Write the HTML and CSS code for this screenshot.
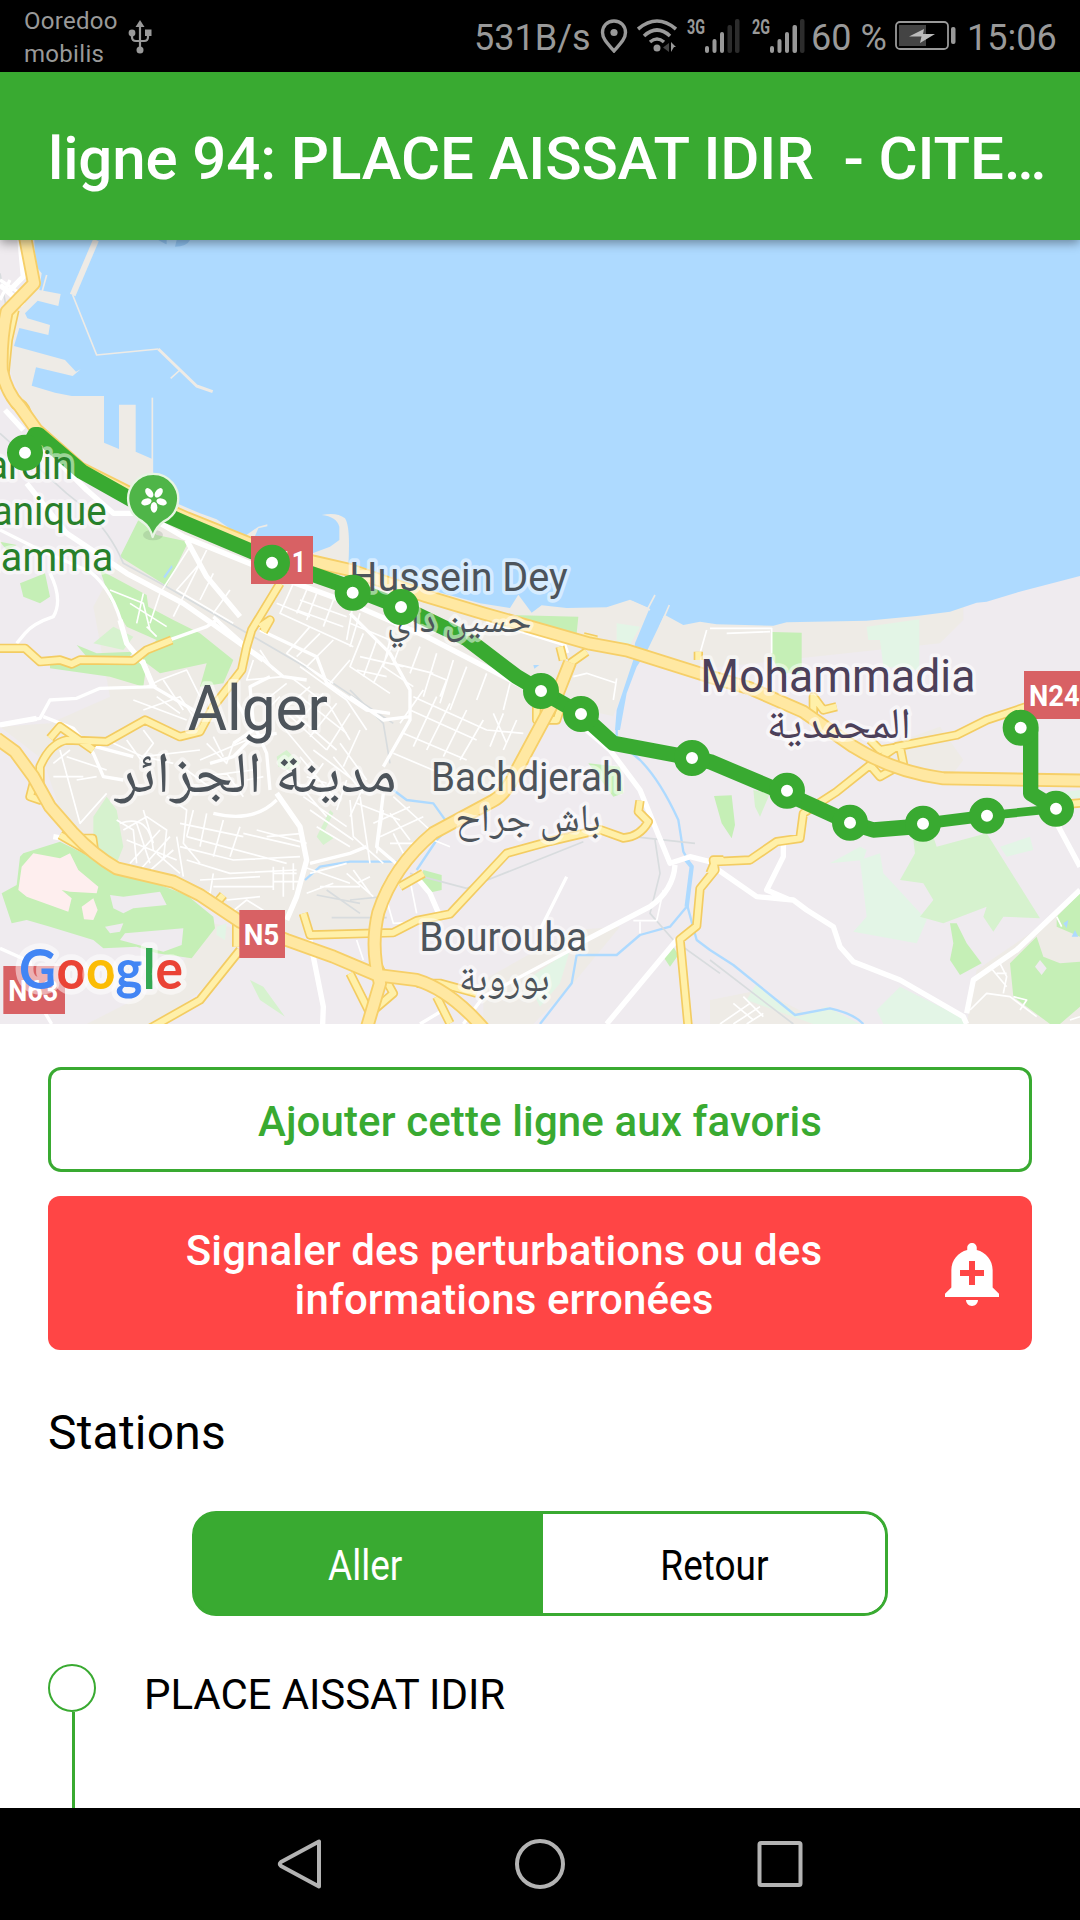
FILE: index.html
```html
<!DOCTYPE html>
<html lang="fr">
<head>
<meta charset="utf-8">
<title>Ligne 94</title>
<link rel="stylesheet" href="styles.css">
</head>
<body>
<div class="status">
  <div class="carriers"><span>Ooredoo</span><span>mobilis</span></div>
  <svg class="usb" viewBox="0 0 24 34" width="24" height="34">
    <path d="M12 4v26M4 14v3q0 4 4 4h8q4 0 4-4v-3" fill="none" stroke="#999" stroke-width="2.2"/>
    <path d="M12 0l4.500 7h-9z" fill="#999"/><circle cx="12" cy="30" r="3.500" fill="#999"/>
    <circle cx="4" cy="13" r="3.400" fill="#999"/><rect x="17" y="9.500" width="6.500" height="6.500" fill="#999"/>
  </svg>
  <div class="grow"></div>
  <span class="speed">531B/s</span>
  <svg class="loc" viewBox="0 0 28 34" width="28" height="34">
    <path d="M14 2C7 2 2.500 7 2.500 13.500 2.500 20 8 25 14 32 20 25 25.500 20 25.500 13.500 25.500 7 21 2 14 2z" fill="none" stroke="#999" stroke-width="3.400"/><circle cx="14" cy="13.500" r="3.600" fill="#999"/>
  </svg>
  <svg class="wifi" viewBox="0 0 40 34" width="40" height="34">
    <g fill="none" stroke="#999" stroke-width="3.600"><path d="M1 10Q20-6 39 10M7 17Q20 5 33 17M13 23Q20 17 27 23"/></g>
    <circle cx="20" cy="29" r="3.500" fill="#999"/><path d="M32 24v9l-6-4.500z" fill="#444"/><path d="M34 23l5 5h-2l-3 5z" fill="#999"/>
  </svg>
  <svg class="signal" viewBox="0 0 53 36" width="53" height="36">
    <text x="0" y="17" textLength="18" lengthAdjust="spacingAndGlyphs" class="net">3G</text>
    <g fill="#999"><rect x="18" y="29" width="4" height="7" rx="2"/><rect x="25.500" y="22" width="4" height="14" rx="2"/><rect x="33" y="15" width="4" height="21" rx="2"/></g>
    <g fill="#2c2c2c"><rect x="40.500" y="8" width="4.500" height="28" rx="2"/><rect x="48" y="2" width="4.500" height="34" rx="2"/></g>
  </svg>
  <svg class="signal second" viewBox="0 0 53 36" width="53" height="36">
    <text x="0" y="17" textLength="18" lengthAdjust="spacingAndGlyphs" class="net">2G</text>
    <g fill="#999"><rect x="18" y="29" width="4" height="7" rx="2"/><rect x="25.500" y="22" width="4" height="14" rx="2"/><rect x="33" y="15" width="4" height="21" rx="2"/><rect x="40.500" y="8" width="4.500" height="28" rx="2"/></g>
    <rect x="48" y="2" width="4.500" height="34" rx="2" fill="#2c2c2c"/>
  </svg>
  <span class="percent">60 %</span>
  <svg class="battery" viewBox="0 0 62 30" width="62" height="30">
    <rect x="1" y="1" width="52" height="27" rx="4" fill="none" stroke="#999" stroke-width="1.800"/><rect x="4" y="4" width="27" height="21" fill="#444"/>
    <path d="M14 15.500L29 8l-1 5h12L25 22l1.500-6.500z" fill="#bbb"/><rect x="56" y="6" width="4.500" height="17" rx="2" fill="#999"/>
  </svg>
  <span class="clock">15:06</span>
</div>

<header class="appbar"><h1>ligne 94: PLACE AISSAT IDIR&nbsp; - CITE…</h1></header>

<svg class="map" viewBox="0 30 3240 2352" preserveAspectRatio="none">
  <defs>
    <path id="highways" d="M75 20L102 160L20 245Q2 330 5 420Q20 490 60 530L110 600L240 715L400 795L560 865L760 945L940 995L1050 1020L1280 1099L1450 1150L1770 1241L1880 1261L2130 1340L2250 1375L2410 1445L2560 1550Q2680 1625 2830 1645L3250 1652M-10 1525L45 1565L100 1640L150 1730L220 1810Q280 1875 350 1915L520 1955L600 1995L720 2075L860 2130L1000 2180L1130 2235L1250 2250Q1350 2280 1450 2395M1710 1297L1670 1398L1550 1621Q1520 1690 1480 1712L1300 1809Q1180 1910 1135 2047Q1110 2150 1140 2260L1100 2395"/>
    <path id="avenues" d="M-10 1255H75L120 1295L180 1290L215 1302L240 1290L400 1292L440 1260L515 1230M840 1060L755 1200L740 1250L725 1320L640 1430L600 1505L540 1520L435 1470L320 1535L200 1530Q150 1540 120 1610V1710L90 1700L100 1660M45 240L25 330L15 430M720 2160L600 2310L450 2395M710 2080V2150M910 2050L930 2115L1180 2108L1250 2072L1350 2052L1520 1870L1650 1834L1800 1799L1870 1824Q1920 1820 1945 1775L1915 1745L1920 1712M2170 1890L2140 1890L2145 1920L2100 1976L2090 2088L2040 2128L2065 2395M2130 1930L2145 1895L2250 1890L2330 1835L2400 1825L2410 1750L2510 1685L2610 1605L2690 1550L2870 1515L2960 1470L3080 1430M2610 1605L2640 1640L2710 1600L2700 1550L2640 1560L2610 1530M2440 1460V1400L2470 1440L2510 1430M3170 1725L3250 1718M780 1190L810 1170L790 1205M640 2030L670 1995M180 1815L285 1875L278 1825L240 1825M1610 1430V1470L1670 1470L1680 1440M1710 1300L1760 1265M1690 1290L1680 1250M1750 1220L1790 1230M2095 1290V1265M1200 1970L1270 1930M1050 2230L1110 2350L1180 2290L1130 2200M1250 2260L1320 2260L1430 2290M1310 2300L1350 2380M30 525Q70 500 85 560M150 1525L180 1490L280 1560"/>
  </defs>

  <rect class="base" y="30" width="3240" height="2352"/>
  <g class="urban">
    <path d="M75 30L110 180L40 220L20 400L90 560L380 800L430 880L360 980L280 1130L330 1400L150 1480L0 1490L130 1590L200 1800L350 1915L640 2010L860 2120L1110 2100L1200 1920L1300 1809L1550 1650L1670 1420L1840 1459L1910 1276L2100 1317L2820 1240L2890 1170V1000Z"/>
    <path d="M2900 2382L2930 2220L3120 2090L3240 1980V2382ZM560 2180L640 2080L860 2130L720 2180L480 2382H260L500 2260ZM1450 2250L1720 2100L1860 2090L1720 2260L1600 2382H1450ZM2130 2310L2280 2280L2480 2382H2130ZM2570 1580L2820 1490L2890 1590L2860 1630L2720 1610Z"/>
  </g>

  <path class="pale" d="M2600 1190L2758 1168V1320L2650 1310L2640 1230H2605ZM1850 1180L1920 1190L1890 1245L1850 1235ZM2490 1900L2580 1850L2600 1860L2590 1890ZM2580 1890L2640 1870L2650 1930L2780 2070L2750 2140L2560 2105L2600 2060ZM3000 1850L3090 1820L3100 1860L3020 1880ZM2630 2340L2700 2270L2900 2370V2382H2650ZM2240 2310L2270 2260L2400 2360L2480 2330L2580 2382H2440ZM1580 2250L1710 2160L1680 2260L1620 2330ZM650 2090L680 2080L675 2130L650 2115ZM3160 1690L3240 1680V1705H3160Z"/>
  <path class="soft" d="M2740 1830L2800 1820L2810 1850L2960 1810L3120 2065L3010 2060L2980 2105L2950 2060L2960 2030L2830 2080L2760 2060L2800 2010L2770 1960L2700 1950L2745 1870ZM2260 1680L2310 1690L2280 1760L2265 1730ZM280 1240L340 1190L400 1220L370 1260ZM320 1700L350 1740L370 1850L350 1900L280 1850V1760ZM830 1580L860 1560L900 1600L870 1620L835 1610ZM750 2250L790 2270L855 2360L780 2310ZM950 1820L990 1740L1000 1750L975 1800L1000 1825L970 1845Z"/>
  <path class="park" d="M415 870L470 915L565 935L500 1068L360 980ZM60 1060L135 1030L150 1100L120 1120L70 1100ZM0 935L50 945L20 960ZM300 1020L440 1095L445 1130L520 1170L600 1210L700 1290L670 1360L600 1370L620 1300L480 1330L440 1300L430 1370L330 1340L150 1315V1300L400 1290L470 1230L380 1190L330 1110ZM230 1245L290 1270L400 1265L380 1290L260 1280ZM2315 1206L2405 1208V1330L2340 1330L2315 1280ZM1530 1155L1735 1160L1730 1210ZM1765 1600L1860 1610L1870 1690L1840 1700ZM2142 1698L2195 1696L2205 1785L2195 1825L2165 1780ZM2850 2080L2870 2080L2900 2140L2945 2200L2880 2235L2850 2190L2860 2140ZM3030 2200L3110 2120L3130 2180L3180 2200L3240 2195V2330L3180 2382H3150L3040 2300ZM3170 2060L3240 1990V2120L3170 2090ZM70 1870L180 1835L290 1890L350 1930L480 1965L560 1995L640 2060L645 2095L575 2185L470 2170L410 2150L310 2155L280 2130L150 2090L80 2070L35 2080L5 1990L50 1965L60 1880ZM1270 1920L1325 1935V1980L1280 1990L1265 1950ZM1990 2180L2020 2150L2035 2175L2010 2210Z"/>
  <path class="hospital" d="M100 1870L180 1885L210 1870L235 1920L295 1970L290 1990L210 1985L185 1980L215 2005L205 2045L80 2000L55 1980L65 1910ZM245 2030L280 2005L293 2040L280 2070L252 2068Z"/>
  <path class="base" d="M330 1995L370 2000L480 1985L500 2025L400 2035L370 2050L340 2035ZM375 2110L550 2095L545 2145L490 2165L360 2130ZM315 2090L370 2080L360 2105L330 2110ZM3105 2210L3120 2190L3140 2215L3125 2235Z"/>

  <path class="water" d="M103 30L105 105L125 130L118 180L182 192L175 228L113 212L75 250L82 265L150 285L145 315L58 294L42 348L195 390L228 425L242 418L218 438L108 412L95 467L165 488L215 498H312V638L357 657V524H407V665L457 687V735L530 820L600 850L650 868L700 903L735 918L775 890L802 883V889L775 895L765 918L938 970L990 950L1018 930V890Q1010 860 965 855Q1010 845 1035 865Q1052 890 1045 1005L1250 1069L1440 1120L1530 1134L1555 1094L1595 1148L1625 1126L1700 1134L1820 1132L1890 1109L1955 1138L1995 1155L2050 1185L2100 1175L2150 1183L2320 1187L2360 1177L2600 1172L2750 1158L2850 1145L2930 1118L2960 1115L3070 1082L3240 1038V30Z"/>
  <path class="water" d="M1955 1120L2000 1140L1940 1265L1910 1310L1880 1390L1860 1500L1845 1500L1850 1440L1900 1290L1905 1240ZM1600 1305L1618 1305L1603 1316ZM490 1040L515 1005L518 1012L495 1045ZM3190 2080L3205 2070L3200 2095ZM3215 2120L3225 2100L3235 2120Z"/>
  <path class="stream" d="M1850 1500V1530L1920 1590Q1980 1650 2035 1770L2050 1865L2075 1910L2060 2020L2090 2130L2130 2160L2200 2205L2385 2355L2490 2335Q2560 2350 2590 2382M915 1950L960 1910L1050 1895L1190 1895M1180 1680L1220 1710L1300 1720L1350 1790L1310 1830L1250 1920M2060 2030L2010 2090L1920 2115L1850 2175L1730 2175L1715 2260L1620 2382"/>
  <path class="streamwide" d="M2055 1885L2075 1910L2060 2030"/>
  <path class="deepwater" d="M475 30Q500 45 500 42V30M525 50L530 30H570Q560 50 525 50"/>
  <path class="jetty jetty-wide" d="M288 30L218 195"/><path class="jetty" d="M218 195L290 375L475 357M512 445L540 420M1920 1180L1965 1095M1980 1190L2008 1125M1895 1115L1950 1140M125 190L140 135"/>
  <path class="jetty jetty-mid" d="M475 357L590 468L638 485"/><path class="jetty" d="M457 503V735"/>

  <path class="rail" d="M0 610L200 790Q320 880 370 1000L500 1070L760 1220L1000 1360L1180 1480M1050 1380L1150 1480L1170 1600M1230 1930L1400 1975L1750 1835M1900 1820L2085 1840M1965 1830L1980 1930L1950 2050L2020 2130L2160 2230M2130 2190L2380 2382M0 130L20 240M950 1995L1080 2020M980 1980L1080 2050M995 2063H1160M1050 2010L1150 2000"/>

  <g class="minor">
    <path d="M570 950L480 1090L450 1180M620 960L520 1160M600 1000L530 1080L700 1180M640 1030L600 1110M690 1080L640 1150M880 1060L840 1150L1060 1250M920 1080L890 1150M950 1090L920 1170M1000 1110L970 1190M900 1110L1040 1160M890 1140L1030 1190M830 1120L930 1160M1060 1120L1040 1230M1080 1150L1050 1250"/>
    <path d="M1050 1180L1170 1230L1150 1310L1240 1370M1090 1210L1050 1310L1170 1390M1130 1230L1090 1340M1180 1240L1120 1360M1080 1280L1210 1310M1070 1320L1160 1340M1210 1220L1180 1300L1300 1330M1260 1250L1230 1330M1310 1270L1270 1400M1360 1290L1320 1420M1400 1310L1350 1440M1530 1360L1510 1440M1460 1330L1430 1410M1240 1400L1460 1500M1230 1440L1430 1530M1270 1380L1200 1480M1310 1400L1240 1550M1350 1420L1280 1560M1400 1440L1330 1580M1450 1470L1380 1590M1210 1510L1400 1590M1180 1570L1370 1650M1480 1450L1520 1540M1510 1450L1470 1550M1550 1470L1510 1560M1460 1500L1570 1510M1290 1330L1340 1350L1320 1400"/>
    <path d="M1000 1230L920 1310L1040 1400M960 1210L890 1280M1050 1290L990 1360M930 1190L860 1270L1000 1360M900 1310L1040 1410L1100 1500M870 1340L990 1430L1050 1530M820 1320L780 1260M760 1290L740 1350L850 1340M930 1370L850 1440L980 1560M970 1390L890 1480M1010 1420L930 1520M1050 1450L980 1560M900 1400L1040 1510M870 1440L1010 1560M840 1480L940 1600M1080 1500L1030 1610M940 1560L1060 1650M900 1580L1000 1700M970 1600L920 1670M1010 1620L960 1710M860 1620L980 1760M1040 1650L1010 1740M1090 1670L1050 1760M1020 1540L1100 1650M1000 1580L1090 1690M840 1400L800 1440M860 1360L810 1400M920 1640L980 1660M910 1700L1040 1790M930 1740L1060 1830M950 1790L1050 1850"/>
    <path d="M350 1770L400 1800L410 1900M370 1800L440 1760L500 1800L490 1890M380 1830L530 1890M390 1900L480 1800M420 1920L510 1820M440 1930L520 1860M360 1780Q450 1750 460 1860M500 1700L560 1740L550 1840L600 1900M540 1780L730 1820M580 1740L560 1820M620 1750L600 1850M670 1770L640 1880M720 1790L690 1880M560 1820L860 1900M540 1850L700 1890L900 1880M560 1890L690 1930L890 1920M600 1950L780 1940M640 1970L820 1970M680 2010L780 2000M820 1910V1980M850 1910V2000M880 1900V1980M820 1930H890M820 1955H895M560 1960L630 1990L640 1930M730 1810L900 1850M770 1800L920 1840M800 1820L910 1810M690 2050L740 2010L820 2060M430 1740L460 1840M410 1780L450 1900M470 1870L540 1930M530 1820L550 1940"/>
    <path d="M1080 1700L1110 1900M1150 1740L1130 1870M1170 1750L1230 1830M1180 1700L1290 1800M1050 1710L1060 1820L1150 1900M1140 1820L1270 1760M1120 1780L1230 1730M1170 1840L1260 1840M1180 1810L1210 1870M1060 1920L1110 1990M1070 1960L1110 1940M1040 1930L1120 2000M1070 1720L1200 1770M910 1910L1050 1960M930 1930L1040 1900M960 1970H1080M920 1990L1000 1960M1230 1950L1250 2050M1160 2010L1180 2080L1270 2075M1070 2130L1090 2190"/>
    <path d="M440 1370L480 1350L560 1320L600 1400M430 1440L540 1400L580 1460M400 1410L560 1470M470 1400L540 1450M490 1350L550 1440M430 1500L460 1540L430 1580L520 1600M340 1540L430 1580L600 1560M380 1530L430 1600M180 1560L240 1780L320 1690M200 1580L320 1620M230 1650L290 1640M160 1600L210 1560M160 1640L250 1640M620 1540L680 1600L700 1540M600 1590L740 1530M640 1520L670 1580M600 1640L760 1620M560 1620L640 1680M680 1630L730 1700M740 1650L790 1640M430 1090L410 1180M330 1080L430 1120L450 1200M390 1120L500 1190M440 1190L470 1220"/>
    <path d="M1720 1340L1760 1330L1850 1360M1850 1345L1840 1410M2130 1195H2315V1270M2120 1200L2100 1270M2180 1210L2310 1205M1900 2072H1970L1990 1980M1920 2075V2110M1350 1850L1300 1830"/>
    <path d="M2160 2382L2250 2320M2200 2382L2280 2330M2240 2382L2290 2350M2200 2320L2260 2370M2230 2300L2290 2360M2910 2340L2960 2290L3030 2300L3110 2360M2970 2210L3020 2270M3000 2200L3020 2240L3010 2290M3040 2300L3080 2310L3060 2340M2990 2230H3020M3170 2060L3185 2090M3210 2370L3240 2360"/>
  </g>
  <g class="street">
    <path d="M0 150L60 190M30 150L0 210M0 900L120 960L270 1025Q340 1080 370 1200M150 1030Q190 1110 160 1160Q100 1180 75 1210L50 1240M0 1485L120 1465L150 1410L230 1405L300 1375L470 1370M430 1290L460 1370L580 1440L620 1470M130 1460L220 1495L280 1570L310 1640L370 1650M250 1540L400 1580M630 1600L700 1580L760 1520L830 1510M0 2155L90 2195L100 2250M130 2340L155 2382"/>
    <path d="M480 1240L620 1190L650 1170M650 1170L720 1240L790 1290L850 1340L920 1350M700 1540L760 1500L700 1400M640 1750Q760 1780 830 1710M810 1680L800 1570L760 1480L750 1370L810 1340M1050 1400L1150 1470L1230 1460M1050 1150L1170 1270L1230 1380V1470L1150 1610M780 1200L950 1280L980 1360L1100 1440L1170 1450M930 1900L1050 1870L1100 1850"/>
    <path d="M640 1160L740 1250M1150 1690L1130 1850L1200 1910M1390 2382L1450 2300L1730 2150M1260 2382L1330 2340M1700 1940L1620 2100"/>
  </g>
  <g class="main">
    <path d="M60 30L70 140L20 190M0 165L70 225M15 540L70 600M80 760L200 910L380 1030L550 1120L650 1190L790 1290M170 690L260 780L340 850L430 850L550 920L760 1005L860 1050L1050 1120L1280 1220L1570 1370L1700 1450L1830 1560L1920 1680L2010 1900L2070 1880L2150 1900M2025 1905Q2020 1980 1950 2030L1700 2160M560 930L620 1040L720 1160M360 1170L380 1240L430 1300L460 1370M830 1690L900 1790L920 1890L890 2000L860 2070M930 2130L970 2330L968 2382M1240 1930L1290 1990L1320 2060M2030 2130L1820 2382M2155 1920L2270 2000L2380 2010L2420 2040L2500 2090L2520 2150L2560 2195L2700 2250L2890 2360L2900 2382M2900 2350L2920 2250L3050 2160L3240 1980M3170 1780L3240 1910M2350 1840L2350 1880L2300 1980L2370 2010M1460 1170L1560 1200L1690 1240L1700 1270M0 1485L110 1465M190 1825L160 1820"/>
  </g>
  <use href="#avenues" class="avenue-case"/><use href="#avenues" class="avenue"/>
  <use href="#highways" class="highway-case"/><use href="#highways" class="highway"/>

  <g class="route">
    <path d="M75 668L105 614L115 614L245 725L400 812L560 882L816 990L1058 1075L1203 1131L1400 1226L1550 1340L1623 1383L1743 1452L1840 1540L2076 1584L2130 1595L2361 1692L2550 1778L2620 1800L2769 1788"/>
    <path d="M2769 1781L2961 1757" stroke-width="36"/><path class="route-end" d="M2961 1757L3168 1736"/>
    <path d="M3062 1490L3092 1500V1690L3168 1736"/>
  </g>

  <g class="shield">
    <rect x="753" y="918" width="186" height="144"/><rect x="718" y="2040" width="137" height="144"/><rect x="10" y="2208" width="185" height="144"/><rect x="3072" y="1323" width="186" height="144"/>
    <text x="780" y="1025" textLength="138" lengthAdjust="spacingAndGlyphs">N11</text><text x="731" y="2146" textLength="107" lengthAdjust="spacingAndGlyphs">N5</text><text x="25" y="2314" textLength="150" lengthAdjust="spacingAndGlyphs">N63</text><text x="3087" y="1429" textLength="152" lengthAdjust="spacingAndGlyphs">N24</text>
  </g>

  <g class="labels">
    <g class="garden"><text x="220" y="748" textLength="323" lengthAdjust="spacingAndGlyphs">Jardin</text><text x="320" y="886" textLength="520" lengthAdjust="spacingAndGlyphs">Botanique</text><text x="340" y="1024" textLength="548" lengthAdjust="spacingAndGlyphs">El Hamma</text></g>
    <text class="small" x="1048" y="1083" textLength="655" lengthAdjust="spacingAndGlyphs">Hussein Dey</text>
    <text class="arabic" x="1160" y="1205" textLength="434" lengthAdjust="spacingAndGlyphs">حسين داي</text>
    <text class="city" x="563" y="1501" textLength="421" lengthAdjust="spacingAndGlyphs">Alger</text>
    <text class="arabic large" x="345" y="1685" textLength="845" lengthAdjust="spacingAndGlyphs">مدينة الجزائر</text>
    <text class="small" x="1293" y="1683" textLength="577" lengthAdjust="spacingAndGlyphs">Bachdjerah</text>
    <text class="arabic" x="1366" y="1803" textLength="436" lengthAdjust="spacingAndGlyphs">باش جراح</text>
    <text class="small" x="1258" y="2163" textLength="504" lengthAdjust="spacingAndGlyphs">Bourouba</text>
    <text class="arabic" x="1377" y="2284" textLength="272" lengthAdjust="spacingAndGlyphs">بوروبة</text>
    <g class="violet"><text class="town" x="2101" y="1386" textLength="825" lengthAdjust="spacingAndGlyphs">Mohammadia</text>
    <text class="arabic town-ar" x="2300" y="1525" textLength="433" lengthAdjust="spacingAndGlyphs">المحمدية</text></g>
  </g>

  <g>
    <ellipse cx="459" cy="915" rx="30" ry="16" fill="#5c735c" opacity=".18"/>
    <path d="M458 921Q450 890 427 874A75 75 0 1 1 492 874Q468 890 458 921Z" fill="#4fb548" stroke="#e8f5e4" stroke-width="7"/>
    <g fill="#fff"><ellipse cx="462" cy="832" rx="10" ry="16"/><ellipse cx="462" cy="832" rx="10" ry="16" transform="rotate(72 462 808)"/><ellipse cx="462" cy="832" rx="10" ry="16" transform="rotate(144 462 808)"/><ellipse cx="462" cy="832" rx="10" ry="16" transform="rotate(216 462 808)"/><ellipse cx="462" cy="832" rx="10" ry="16" transform="rotate(288 462 808)"/></g>
  </g>

  <g class="stops">
    <circle cx="75" cy="668" r="36"/><circle cx="816" cy="998" r="36"/><circle cx="1058" cy="1088" r="36"/><circle cx="1203" cy="1131" r="36"/><circle cx="1623" cy="1383" r="36"/><circle cx="1743" cy="1452" r="36"/><circle cx="2076" cy="1584" r="36"/><circle cx="2361" cy="1682" r="36"/><circle cx="2550" cy="1778" r="36"/><circle cx="2769" cy="1781" r="36"/><circle cx="2961" cy="1757" r="36"/><circle cx="3168" cy="1736" r="36"/><circle cx="3062" cy="1493" r="36"/>
  </g>

  <text class="google" x="57" y="2278" textLength="492" lengthAdjust="spacingAndGlyphs"><tspan fill="#4285f4">G</tspan><tspan fill="#ea4335">o</tspan><tspan fill="#fbbc05">o</tspan><tspan fill="#4285f4">g</tspan><tspan fill="#34a853">l</tspan><tspan fill="#ea4335">e</tspan></text>
</svg>

<main class="content">
  <button class="favorite">Ajouter cette ligne aux favoris</button>
  <button class="report">
    <span>Signaler des perturbations ou des<br>informations erronées</span>
    <svg viewBox="0 0 24 24" width="72" height="72"><path fill="#fff" d="M10.010 21.010c0 1.100.890 1.990 1.990 1.990s1.990-.890 1.990-1.990h-3.980zm8.870-4.190V11c0-3.250-2.250-5.970-5.290-6.690v-.720C13.590 2.710 12.880 2 12 2s-1.590.710-1.590 1.590v.720C7.370 5.030 5.120 7.750 5.120 11v5.820L3 18.940V20h18v-1.060l-2.120-2.120zM16 13.010h-3v3h-2v-3H8V11h3V8h2v3h3v2.010z"/></svg>
  </button>
  <h2>Stations</h2>
  <div class="toggle"><div class="on"><span>Aller</span></div><div class="off"><span>Retour</span></div></div>
  <div class="station">
    <div class="rail-mark"><i class="dot"></i><i class="line"></i></div>
    <span>PLACE AISSAT IDIR</span>
  </div>
</main>

<nav class="navbar">
  <svg viewBox="0 0 50 54" width="50" height="54"><path d="M44 4.500V49.500L6 29Q3.500 27 6 25Z" fill="none" stroke="#b3b3b3" stroke-width="4" stroke-linejoin="round"/></svg>
  <svg viewBox="0 0 50 54" width="50" height="54"><circle cx="25" cy="27" r="23" fill="none" stroke="#b3b3b3" stroke-width="4"/></svg>
  <svg viewBox="0 0 50 54" width="50" height="54"><rect x="4.500" y="6" width="41" height="42" rx="1.500" fill="none" stroke="#b3b3b3" stroke-width="4"/></svg>
</nav>
</body>
</html>
```
FILE: styles.css
```css
* { box-sizing: border-box; }
body { margin: 0; width: 1080px; height: 1920px; display: flex; flex-direction: column; overflow: hidden; background: #fff; font-family: Roboto, "Noto Sans", sans-serif; color: #000; }
button { font: inherit; padding: 0; }

.status { height: 72px; flex: none; background: #000; color: #999; display: flex; align-items: center; padding: 0 24px; font-size: 36px; line-height: 42px; }
.carriers { display: flex; flex-direction: column; font-size: 24px; line-height: 33px; width: 94px; padding-top: 3px; letter-spacing: .3px; }
.usb { margin: 2px 0 0 10px; }
.grow { flex: 1; }
.status span { white-space: nowrap; padding-top: 3px; }
.carriers span { padding: 0; }
.speed { width: 113px; }
.loc { margin-left: 13px; }
.wifi { margin-left: 9px; }
.signal { margin-left: 10px; margin-top: -2px; overflow: visible; }
.second { margin-left: 12px; }
.net { font: 700 20px Roboto, sans-serif; fill: #999; }
.percent { width: 75px; margin-left: 6px; }
.battery { margin-left: 9px; }
.clock { width: 89px; margin-left: 10px; }

.appbar { position: relative; height: 168px; flex: none; background: #39aa31; padding: 0 24px 0 48px; display: flex; align-items: center; box-shadow: 0 3px 10px rgba(0, 0, 0, .4); z-index: 1; }
.appbar h1 { margin: 6px 0 0; color: #fff; font-size: 60px; font-weight: 500; line-height: 72px; letter-spacing: -.12px; white-space: pre; }

.map { display: block; width: 1080px; height: 784px; flex: none; }
.map path { stroke-linejoin: round; }
.base { fill: #efebef; }
.urban { fill: #eeebe6; }
.pale { fill: #e3f5e6; }
.soft { fill: #d6f2ce; }
.park { fill: #c5efb6; }
.hospital { fill: #feeeee; }
.water { fill: #aedaff; }
.deepwater { fill: #8fc3f2; }
.stream { fill: none; stroke: #aedaff; stroke-width: 7; }
.streamwide { fill: none; stroke: #aedaff; stroke-width: 13; }
.jetty { fill: none; stroke: #eeebe6; stroke-width: 5; }
.jetty-wide { stroke-width: 18; }
.jetty-mid { stroke-width: 9; }
.rail { fill: none; stroke: #d8dcde; stroke-width: 5; }
.minor, .street, .main { fill: none; stroke: #fff; }
.minor { stroke-width: 5; }
.street { stroke-width: 10; }
.main { stroke-width: 16; }
.highway, .highway-case, .avenue, .avenue-case { fill: none; }
.highway-case { stroke: #f6cf68; stroke-width: 42; }
.highway { stroke: #ffe8a2; stroke-width: 31; }
.avenue-case { stroke: #f3cc62; stroke-width: 28; }
.avenue { stroke: #fff0a9; stroke-width: 18; }
.route { fill: none; stroke: #39aa31; stroke-width: 46; stroke-linecap: round; }
.route-end { stroke-width: 26; }
.stops { fill: #fff; stroke: #39aa31; stroke-width: 36; }
.shield { fill: #d86164; }
.shield text { fill: #fff; font: 700 88px Roboto, sans-serif; }
.labels { fill: #4d545b; stroke: rgba(255, 255, 255, .5); stroke-width: 22px; stroke-linejoin: round; font-family: Roboto, sans-serif; }
.labels text { paint-order: stroke; }
.small { font-size: 124px; }
.city { font-size: 190px; }
.town { font-size: 139px; }
.garden { fill: #28802a; font-size: 122px; text-anchor: end; }
.violet { fill: #4c4059; }
.arabic { font-family: "Noto Naskh Arabic", "Noto Sans Arabic", "DejaVu Sans", sans-serif; font-size: 116px; }
.large { font-size: 172px; }
.town-ar { font-size: 130px; }
.google { font-family: Lato, sans-serif; font-size: 164px; font-weight: 700; paint-order: stroke; stroke: rgba(255, 255, 255, .5); stroke-width: 34px; stroke-linejoin: round; }

.content { height: 784px; flex: none; display: flex; flex-direction: column; padding: 43px 48px 0; overflow: hidden; }
.favorite { height: 105px; flex: none; border: 3px solid #39aa31; border-radius: 13px; background: #fff; color: #39aa31; font-size: 42px; font-weight: 500; letter-spacing: .12px; padding-top: 4px; }
.report { height: 154px; flex: none; margin-top: 24px; border: 0; border-radius: 12px; background: #ff4545; color: #fff; display: flex; align-items: center; padding-right: 24px; font-size: 42px; font-weight: 500; line-height: 49px; letter-spacing: .12px; }
.report span { flex: 1; padding: 4px 0 0 24px; }
.content h2 { margin: 55px 0 0; height: 56px; flex: none; font-size: 48px; line-height: 56px; font-weight: 400; letter-spacing: .2px; }
.toggle { width: 696px; height: 105px; flex: none; align-self: center; margin-top: 50px; display: flex; border: 3px solid #39aa31; border-radius: 24px; overflow: hidden; font-size: 42px; background: linear-gradient(to right, #39aa31 50%, #fff 50%) border-box; }
.toggle div { display: flex; align-items: center; justify-content: center; }
.toggle span { transform: scaleX(.88); padding-top: 3px; }
.on { width: 348px; padding-right: 7px; background: #39aa31; color: #fff; }
.off { flex: 1; background: #fff; border-radius: 0 21px 21px 0; }
.station { display: flex; gap: 48px; margin-top: 48px; font-size: 42px; line-height: 62px; letter-spacing: -.1px; }
.rail-mark { width: 48px; display: flex; flex-direction: column; align-items: center; }
.dot { width: 48px; height: 48px; border: 2px solid #39aa31; border-radius: 50%; }
.line { width: 3px; height: 96px; margin-left: 3px; background: #39aa31; }

.navbar { height: 112px; flex: none; background: #000; display: flex; justify-content: center; align-items: center; gap: 190px; }
```
